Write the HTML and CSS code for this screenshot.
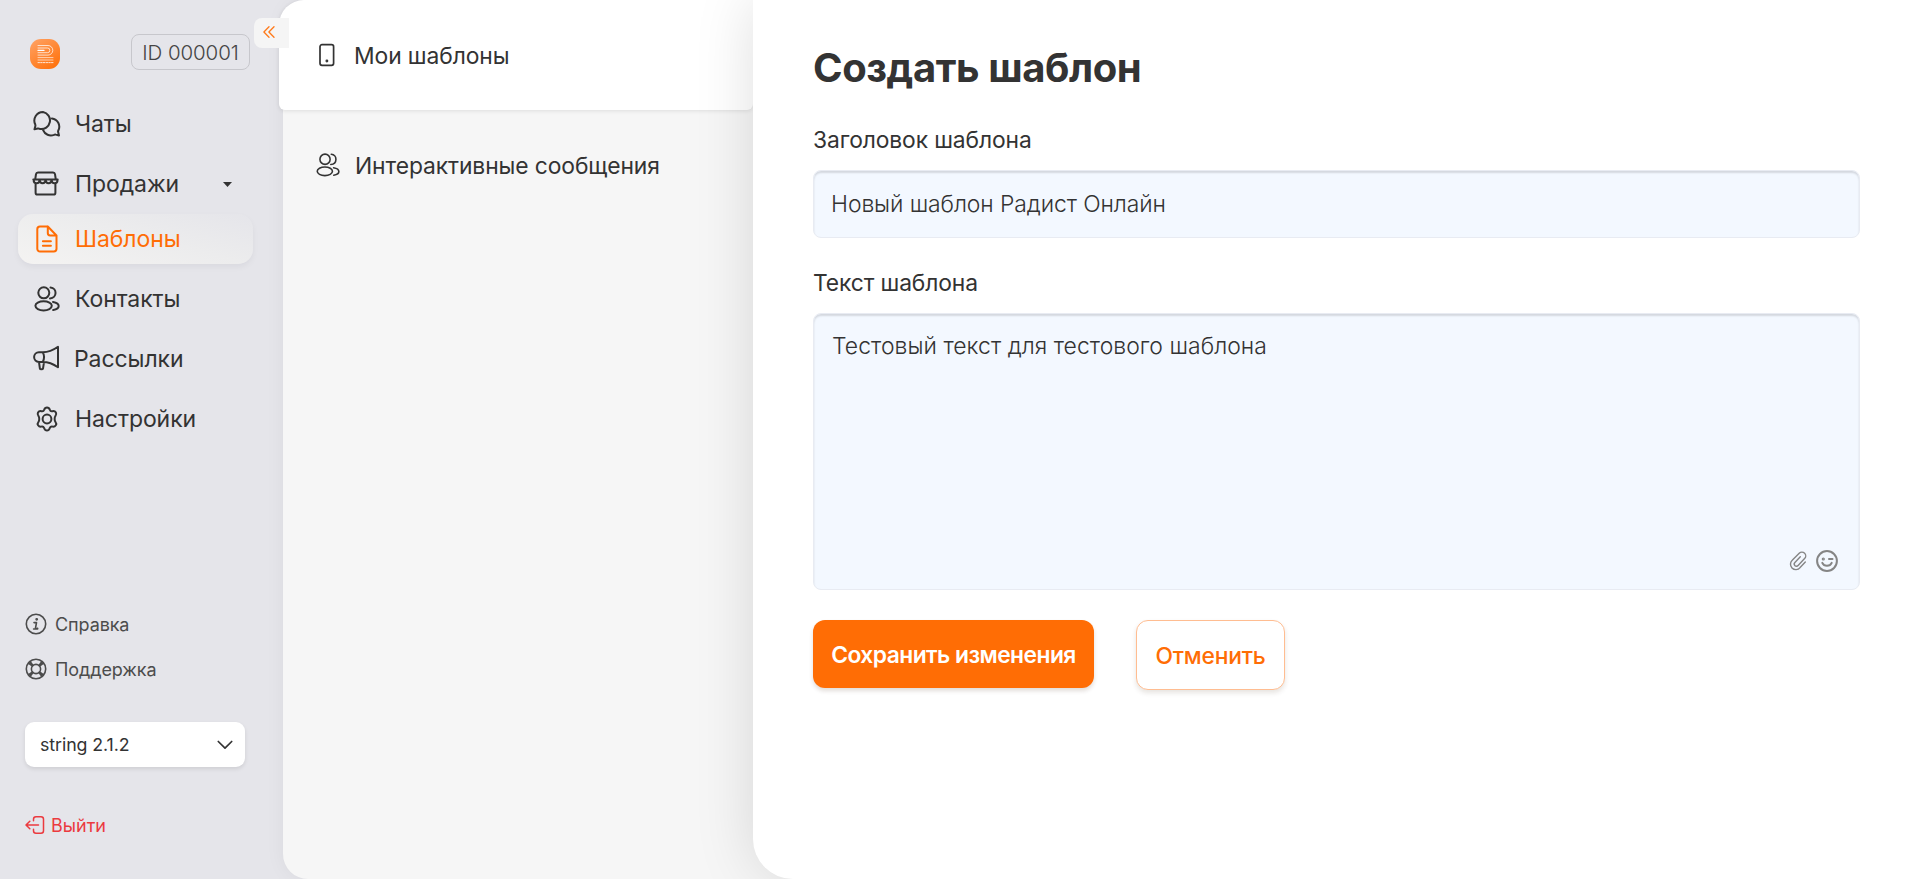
FILE: index.html
```html
<!DOCTYPE html>
<html lang="ru">
<head>
<meta charset="utf-8">
<title>Создать шаблон</title>
<link rel="stylesheet" href="styles.css">
</head>
<body>
<div class="app">
  <aside class="sidebar">
    <header class="brand">
      <svg class="logo" viewBox="0 0 30 30">
        <defs><linearGradient id="lg" x1="0" y1="0" x2="0.7" y2="1"><stop offset="0" stop-color="#ffa366"/><stop offset="1" stop-color="#ff7410"/></linearGradient></defs>
        <rect width="30" height="30" rx="11" fill="url(#lg)"/>
        <g fill="none" stroke="#fff" stroke-width=".8">
          <path d="M8 6.500h10a4.800 4.800 0 0 1 0 9.600H8M8 9h9.500a2.300 2.300 0 0 1 0 4.700H8" opacity=".9"/>
          <path d="M8 11.400h6" stroke-width="1.200"/>
          <path d="M8 18.600h15M8 21h15" opacity=".8"/>
          <path d="M8 23.600h15" stroke-dasharray="1.500 1.200"/>
        </g>
      </svg>
      <span class="account">ID 000001</span>
    </header>
    <button class="collapse" aria-label="Свернуть">
      <svg width="12" height="12" viewBox="0 0 12 12"><path d="M6 .8.900 6 6 11.200M11 .8 5.900 6 11 11.200"/></svg>
    </button>
    <nav class="nav">
      <a class="item">
        <svg width="28" height="28" viewBox="0 0 28 28"><path d="M10 2a8.600 8.600 0 0 0-7.800 12.300c.3.700.300 1.300.100 2L1.500 19.300l3.300-.7c.7-.1 1.300 0 2 .3A8.600 8.600 0 1 0 10 2Z"/><path d="M18.900 8.400a8.300 8.300 0 0 1 6.400 12.100c-.3.600-.300 1.100-.100 1.700l.8 3.300-3.200-.9c-.6-.2-1.200-.1-1.800.2a8.300 8.300 0 0 1-10.900-4.600"/></svg>
        <span>Чаты</span>
      </a>
      <a class="item">
        <svg width="28" height="28" viewBox="0 0 28 28"><path d="M3.200 9.500 4 4.200C4.200 3 4.800 2.500 6 2.500h15c1.200 0 1.800.5 2 1.700l.8 5.300M1.300 9.500h24.400M1.600 9.700c0 4.800 5.900 4.800 6 0 0 4.600 5.900 4.600 6 0 0 4.600 5.900 4.600 6 0 .100 4.800 5.900 4.800 6 0M3.600 13.500v9.200c0 1.200.7 1.900 1.900 1.900h16c1.200 0 1.900-.7 1.900-1.900v-9.200"/></svg>
        <span>Продажи</span>
        <i class="caret"></i>
      </a>
      <a class="item active">
        <svg width="28" height="28" viewBox="0 0 28 28"><path d="M14.500 1.500H7A2.700 2.700 0 0 0 4.300 4.200v19.600A2.700 2.700 0 0 0 7 26.500h13.800a2.700 2.700 0 0 0 2.700-2.700V10.500l-8.700-9v6.600c0 1.500.8 2.400 2.300 2.400h6.400M9.900 16.300h8M9.900 20.700h8"/></svg>
        <span>Шаблоны</span>
      </a>
      <a class="item">
        <svg width="28" height="28" viewBox="0 0 28 28"><use href="#users"/></svg>
        <span>Контакты</span>
      </a>
      <a class="item wide-icon">
        <svg width="28" height="28" viewBox="0 0 28 28"><path d="M9.800 7.300C16 7.300 20.500 5 25 1.800v20.400c-4.500-3.200-9-5.300-15.200-5.300H5.900a4.800 4.800 0 0 1 0-9.600Zm0 0c1.600 3 1.600 6.600 0 9.600M6 17l.9 6.600c.1 1 2.900 1 3.100 0l1-6.400"/></svg>
        <span>Рассылки</span>
      </a>
      <a class="item">
        <svg width="28" height="28" viewBox="0 0 28 28"><circle cx="14" cy="14" r="4.400"/><path d="M11.200 4.700c.5-1.500 1.300-2.200 2.800-2.200s2.300.7 2.800 2.200c.4 1.200 1.500 1.800 2.700 1.500 1.600-.3 2.600 0 3.400 1.300.7 1.300.5 2.300-.5 3.500-1 1.300-1 4.600 0 5.800 1 1.200 1.200 2.200.4 3.500-.8 1.200-1.800 1.600-3.300 1.300-1.300-.3-2.300.4-2.800 1.600-.5 1.500-1.200 2.300-2.700 2.300s-2.300-.8-2.800-2.300c-.5-1.200-1.500-1.900-2.800-1.600-1.500.3-2.500-.1-3.300-1.300-.8-1.300-.6-2.300.4-3.500 1-1.200 1-4.500 0-5.800-1-1.200-1.200-2.200-.5-3.500.8-1.300 1.800-1.600 3.400-1.300 1.200.3 2.400-.3 2.800-1.500Z"/></svg>
        <span>Настройки</span>
      </a>
    </nav>
    <div class="help">
      <a class="link">
        <svg width="22" height="22" viewBox="0 0 22 22"><circle cx="11" cy="11" r="9.700"/><path d="M9 9.600h2.500l-1 5.400c-.1.900.9 1 2.200.3M8.600 16h4"/><circle cx="11.700" cy="6.300" r=".6" fill="currentColor"/></svg>
        <span>Справка</span>
      </a>
      <a class="link">
        <svg width="22" height="22" viewBox="0 0 22 22"><circle cx="11" cy="11" r="9.700"/><circle cx="11" cy="11" r="4.600"/><path d="m3.500 5 4 3M5 3.500l3 4M17 3.500l-3 4M18.500 5l-4 3M3.500 17l4-3M5 18.500l3-4M17 18.500l-3-4M18.500 17l-4-3"/></svg>
        <span>Поддержка</span>
      </a>
    </div>
    <div class="select">
      <span>string 2.1.2</span>
      <svg width="16" height="10" viewBox="0 0 16 10"><path d="m1.300 1.500 6.700 6.700 6.700-6.700"/></svg>
    </div>
    <a class="logout">
      <svg width="20" height="18" viewBox="0 0 20 18"><path d="M8.500 4.800V3.300c0-1.600.9-2.500 2.500-2.500h5c1.600 0 2.500.9 2.500 2.500v11.400c0 1.600-.9 2.500-2.500 2.500h-5c-1.600 0-2.500-.9-2.500-2.500v-1.500M13.500 9H1.200M4.800 5.300 1 9l3.800 3.700"/></svg>
      <span>Выйти</span>
    </a>
  </aside>

  <section class="sections">
    <a class="tab current">
      <svg width="24" height="24" viewBox="0 0 24 24"><rect x="5" y="1.700" width="13.600" height="20.600" rx="2"/><circle cx="11.900" cy="18" r=".6" fill="currentColor"/></svg>
      <span>Мои шаблоны</span>
    </a>
    <a class="tab">
      <svg width="26" height="26" viewBox="0 0 28 28"><use href="#users"/></svg>
      <span>Интерактивные сообщения</span>
    </a>
  </section>

  <main class="editor">
    <h1>Создать шаблон</h1>
    <label>Заголовок шаблона</label>
    <div class="field">Новый шаблон Радист Онлайн</div>
    <label>Текст шаблона</label>
    <div class="field area">
      <span>Тестовый текст для тестового шаблона</span>
      <div class="tools">
        <svg width="18" height="20" viewBox="0 0 18 20"><path d="m16.300 11-5.200 5.600a5.400 5.400 0 0 1-8.100.3 5.400 5.400 0 0 1 .2-7.700l7-7a3.800 3.800 0 0 1 5.400 5.400l-6.500 7a2.200 2.200 0 0 1-3.200-3.100l5.400-5.800" stroke-width="1.400"/></svg>
        <svg width="22" height="22" viewBox="0 0 22 22"><circle cx="11" cy="11" r="9.900"/><path d="M6.300 12.800c1.800 4 7.600 4 9.400 0M13 9h3.500"/><circle cx="7.300" cy="9" r=".6" fill="currentColor"/></svg>
      </div>
    </div>
    <div class="actions">
      <button class="btn primary">Сохранить изменения</button>
      <button class="btn outline">Отменить</button>
    </div>
  </main>
</div>
<svg class="defs"><defs><g id="users"><circle cx="10.800" cy="7.800" r="5.500"/><ellipse cx="10.600" cy="20.800" rx="8.200" ry="4.600"/><path d="M17.500 2.500c6.800.5 6.800 10.600-.5 11M20 17c7.500 1.200 7.600 6.900.2 8"/></g></defs></svg>
</body>
</html>
```
FILE: styles.css
```css
* { box-sizing: border-box; }
body {
  margin: 0;
  background: #e5e5ea;
  color: #333;
  font-family: Inter, sans-serif;
  overflow: hidden;
}
svg { flex: none; fill: none; stroke: currentColor; stroke-width: 2; stroke-linecap: round; stroke-linejoin: round; }
.defs { position: absolute; width: 0; height: 0; }
button { font-family: inherit; }
.app { display: flex; width: 1920px; height: 879px; }

.sidebar {
  position: relative;
  z-index: 1;
  flex: none;
  width: 283px;
  padding: 34px 24px 0 18px;
  display: flex;
  flex-direction: column;
}
.brand { display: flex; align-items: center; justify-content: space-between; height: 36px; padding: 0 9px 0 12px; }
.logo { width: 30px; height: 30px; margin-top: 4px; stroke: none; }
.account {
  width: 119px;
  height: 36px;
  border: 1px solid #c7c7cc;
  border-radius: 8px;
  font-size: 20.500px;
  font-weight: 300;
  line-height: 35px;
  text-align: center;
  letter-spacing: -.1px;
  color: #444;
}
.collapse {
  position: absolute;
  left: 254px;
  top: 18px;
  width: 35px;
  height: 30px;
  padding: 0 0 2px 9px;
  border: 0;
  border-radius: 8px 0 0 8px;
  background: #f5f5f5;
  color: #ff7a1a;
  display: flex;
  align-items: center;
}
.collapse svg { stroke-width: 1.300; }

.nav { display: flex; flex-direction: column; gap: 10px; margin: 29px 6px 0 0; }
.item {
  display: flex;
  align-items: center;
  gap: 14px;
  height: 50px;
  padding-left: 15px;
  border-radius: 15px;
  font-size: 23px;
  letter-spacing: -.08px;
}
.item:nth-child(2) { padding-left: 14px; gap: 15px; }
.caret {
  width: 9px;
  height: 5px;
  margin: 1px 21px 0 auto;
  background: #333;
  clip-path: polygon(0 0, 100% 0, 50% 100%);
}
.active {
  margin-top: -5px;
  color: #ff6d05;
  background: linear-gradient(15deg, #f4f3f2 0%, #ececed 55%, #e5e5ea 100%);
  box-shadow: 0 3px 6px rgba(0, 0, 40, .05);
}
.wide-icon { gap: 13px; }

.help { display: flex; flex-direction: column; gap: 23px; margin-top: 169px; padding-left: 7px; color: #4c4c4c; font-size: 18px; letter-spacing: -.1px; }
.link { display: flex; align-items: center; gap: 8px; height: 22px; }
.link svg { stroke-width: 1.600; }
.select {
  display: flex;
  align-items: center;
  justify-content: space-between;
  width: 220px;
  height: 45px;
  margin: 42px 0 0 7px;
  padding: 0 12px 0 15px;
  border-radius: 9px;
  background: #fff;
  box-shadow: 0 2px 4px rgba(0, 0, 0, .1);
  font-size: 17.800px;
  letter-spacing: -.08px;
}
.select svg { stroke-width: 1.700; }
.logout { display: flex; align-items: center; gap: 6px; height: 24px; margin: 46px 0 0 7px; font-size: 18px; color: #eb3a3f; }
.logout svg { stroke-width: 1.500; }

.sections {
  flex: none;
  width: 540px;
  background: #f6f6f6;
  border-radius: 25px 0 0 25px;
  box-shadow: 0 0 20px rgba(0, 0, 40, .05);
}
.tab {
  display: flex;
  align-items: center;
  gap: 14px;
  width: 470px;
  height: 110px;
  padding-left: 32px;
  font-size: 22.850px;
  letter-spacing: -.1px;
}
.tab span { padding-top: 2px; }
.tab svg { stroke-width: 1.700; }
.current {
  width: 474px;
  margin-left: -4px;
  padding-left: 36px;
  gap: 15px;
  background: #fff;
  border-radius: 25px 0 6px 6px;
  box-shadow: 0 1px 4px rgba(0, 0, 0, .1);
}

.editor {
  position: relative;
  flex: 1;
  margin-left: -70px;
  padding: 43px 60px 0;
  background: #fff;
  border-radius: 0 0 0 40px;
  box-shadow: 0 0 60px rgba(0, 0, 0, .13);
}
h1 { margin: 0; font-size: 40px; font-weight: 700; line-height: 49px; letter-spacing: -.42px; }
label { display: block; margin: 25px 0 0; font-size: 22.800px; line-height: 40px; letter-spacing: -.1px; }
h1 + label { margin-top: 28px; }
.field {
  height: 68px;
  margin-top: 10px;
  padding: 0 17px;
  border: 1px solid #e8ebf2;
  border-radius: 8px;
  background: #f3f8ff;
  box-shadow: inset 0 2px 2px rgba(0, 0, 0, .13);
  font-size: 22.950px;
  font-weight: 300;
  line-height: 66px;
  letter-spacing: -.1px;
}
.area {
  display: flex;
  flex-direction: column;
  justify-content: space-between;
  height: 277px;
  padding: 18px 21px 17px 18px;
  line-height: 28px;
  letter-spacing: .04px;
}
.tools { display: flex; justify-content: flex-end; align-items: center; gap: 9px; color: #858585; }
.actions { display: flex; align-items: flex-start; gap: 42px; margin-top: 30px; }
.btn { height: 68px; border: 0; border-radius: 12px; padding: 0; font-size: 22.800px; font-weight: 600; letter-spacing: -.53px; }
.primary { width: 281px; background: #ff6d05; color: #fff; box-shadow: 0 3px 4px rgba(60, 30, 0, .15); }
.outline {
  width: 149px;
  height: 70px;
  border: 1px solid #ffbd91;
  background: #fff;
  color: #ff6d05;
  font-weight: 500;
  letter-spacing: -.2px;
  box-shadow: 0 3px 5px rgba(60, 30, 0, .12);
}
```
